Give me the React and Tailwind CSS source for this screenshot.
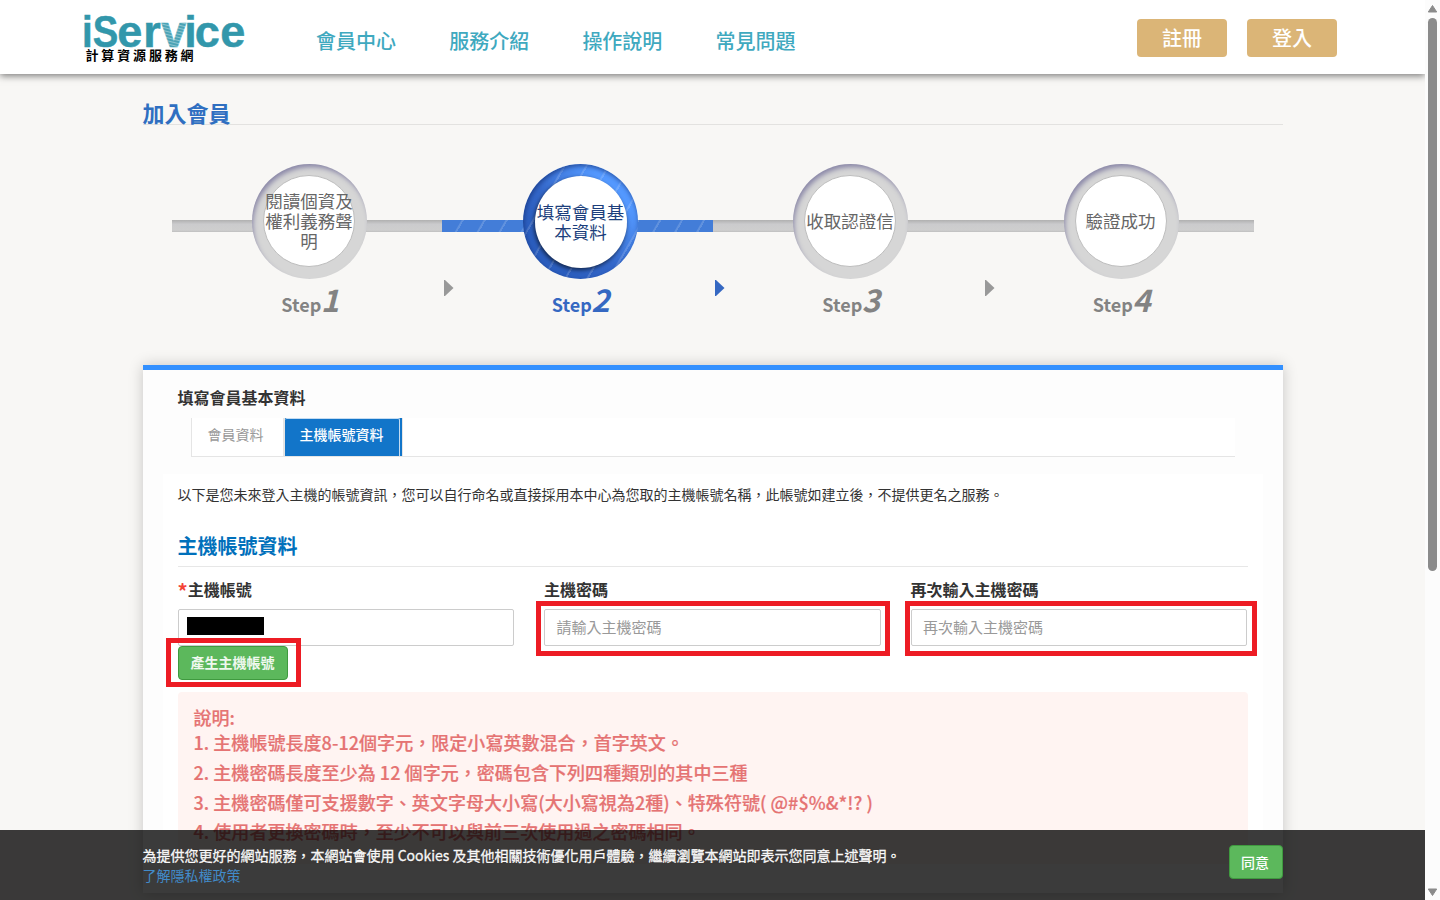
const NAV = ["會員中心", "服務介紹", "操作說明", "常見問題"];

const STEPS = [
  { n: 1, label: "閱讀個資及權利義務聲明" },
  { n: 2, label: "填寫會員基本資料", active: true },
  { n: 3, label: "收取認證信" },
  { n: 4, label: "驗證成功" },
];

const RULES = [
  "1. 主機帳號長度8-12個字元，限定小寫英數混合，首字英文。",
  "2. 主機密碼長度至少為 12 個字元，密碼包含下列四種類別的其中三種",
  "3. 主機密碼僅可支援數字、英文字母大小寫(大小寫視為2種)、特殊符號( @#$%&*!? )",
  "4. 使用者更換密碼時，至少不可以與前三次使用過之密碼相同。",
];

function Logo() {
  return (
    <svg width="172" height="66" viewBox="0 0 172 66" className="block">
      <defs>
        <pattern id="hatch" width="3" height="3" patternUnits="userSpaceOnUse" patternTransform="rotate(14)">
          <rect width="3" height="3" fill="#8fc5cf" />
          <rect width="3" height="2" fill="#4ba3b5" />
        </pattern>
      </defs>
      <g fontFamily="'Liberation Sans', sans-serif" fontWeight="700" fontSize="45" fill="#3297ab" stroke="#3297ab" strokeWidth="0.5">
        <text transform="scale(0.85 1)" x="7 19.8" y="47.3">iS</text>
        <text x="41.3 67.2 85.3 108.3 118.8 144.2" y="47.3">er<tspan fill="url(#hatch)" stroke="url(#hatch)">v</tspan>ice</text>
      </g>
      <text x="9.5" y="60" fontFamily="'Noto Sans CJK TC', sans-serif" fontWeight="700" fontSize="13" letterSpacing="2.85" fill="#000">
        計算資源服務網
      </text>
    </svg>
  );
}

function Header() {
  return (
    <header className="relative z-10 flex h-[74px] shrink-0 bg-white pl-[76px] pr-[88px] shadow-[0_2px_7px_rgba(0,0,0,0.5)]">
      <div className="w-[240px]"><Logo /></div>
      <nav className="flex h-[82px] items-center gap-[53.2px] text-xl leading-5 font-medium text-[#3fa9bf]">
        {NAV.map((t) => <a key={t}>{t}</a>)}
      </nav>
      <div className="ml-auto flex gap-5 pt-[19px]">
        {["註冊", "登入"].map((t) => (
          <button key={t} className="h-[38px] w-[90px] rounded bg-[#dbb577] text-xl leading-5 font-medium text-white">{t}</button>
        ))}
      </div>
    </header>
  );
}

function Ring({ active, label }) {
  if (active) {
    return (
      <div className="flex size-[115px] items-center justify-center rounded-full bg-[repeating-linear-gradient(120deg,rgba(255,255,255,0)_0_16.5px,rgba(255,255,255,0.16)_17.5px_19px),linear-gradient(45deg,#2c5fc0_25%,#3467c9_45%,#5499ff_78%)] pl-px shadow-[inset_1px_2px_5px_rgba(20,50,120,0.75)]">
        <div className="flex size-[92px] items-center justify-center rounded-full bg-white text-center text-[17.5px] leading-5 text-[#1d3f7c] shadow-[-1px_2px_4px_rgba(0,0,0,0.6)]">
          <span className="w-[90px]">{label}</span>
        </div>
      </div>
    );
  }
  return (
    <div className="flex size-[115px] items-center justify-center rounded-full bg-[#d6d6d6] pr-px pb-px shadow-[inset_2px_4px_5px_-1px_rgba(85,80,135,0.6)]">
      <div className="flex size-[92px] items-center justify-center rounded-full border border-[#bdbdbd] bg-white text-center text-[17.5px] leading-5 text-[#666]">
        <span className="-mx-1 w-[90px] shrink-0 pb-px">{label}</span>
      </div>
    </div>
  );
}

function Step({ n, label, active }) {
  return (
    <li className={active ? "w-[270.5px] text-[#3568c2]" : "w-[270.5px] text-[#838383]"}>
      <div className="grid items-center">
        <div className={active
          ? "col-start-1 row-start-1 mt-[9px] h-3 bg-[#437dd8] bg-[repeating-linear-gradient(120deg,rgba(255,255,255,0)_0_16.5px,rgba(255,255,255,0.16)_17.5px_19px)]"
          : "col-start-1 row-start-1 mt-[9px] h-3 bg-[#cecece] bg-[linear-gradient(#b0b0b0,#cbcbcd_35%,#cecece_85%,#bfbfbf)]"} />
        <div className="col-start-1 row-start-1 flex justify-center pl-[5.5px]">
          <div className="relative"><Ring active={active} label={label} /></div>
        </div>
      </div>
      <div className="flex h-11 items-baseline justify-center pl-[7px] font-bold">
        <span className="text-[18px] leading-[39px]">Step</span>
        <span className="-ml-[0.5px] text-[31px] leading-[39px] italic">{n}</span>
      </div>
    </li>
  );
}

function Arrow({ className }) {
  return (
    <svg className={className} width="10" height="16" viewBox="0 0 10 16">
      <path d="M0 0L1 0L9.5 8L1 16L0 16Z" fill="currentColor" />
    </svg>
  );
}

function Steps() {
  return (
    <div className="relative mt-[39px] ml-[29px]">
      <ol className="flex">
        {STEPS.map((s) => <Step key={s.n} {...s} />)}
      </ol>
      <Arrow className="absolute top-[116px] left-[272px] text-[#999]" />
      <Arrow className="absolute top-[116px] left-[543px] text-[#3568c2]" />
      <Arrow className="absolute top-[116px] left-[813px] text-[#999]" />
    </div>
  );
}

function Field({ label, required, placeholder, children, marked }) {
  return (
    <div className="w-[336.5px]">
      <label className="flex h-6 items-center text-base font-bold text-[#333]">
        {required && <span className="pt-[3px] text-[20px] leading-4 text-[#f44336]">*</span>}
        {label}
      </label>
      <div className="relative mt-2 flex h-[37px] items-center rounded-xs border border-[#ccc] bg-white px-[11.5px] text-[15px] text-[#999]">
        {placeholder}
        {children}
        {marked && <div className={marked} />}
      </div>
    </div>
  );
}

function Card() {
  return (
    <section className="mt-[42px] h-[528px] border-t-5 border-[#3390ff] bg-[#fdfdfd] px-5 shadow-[0_0_14px_rgba(0,0,0,0.2)]">
      <h3 className="ml-[15px] pt-[15px] text-base leading-6 font-bold text-[#333]">填寫會員基本資料</h3>
      <div className="mt-[9px] mr-7 ml-7 flex h-[39px] w-[1044px] border-b border-l border-[#e5e5e5] bg-white text-sm">
        <div className="w-[91px] pt-[6px] pl-4 leading-5 text-[#999]">會員資料</div>
        <div className="h-[38px] w-[120px] border-r border-l-2 border-[#e5e5e5] bg-[#1275c9]">
          <div className="h-full w-[115px] rounded-t-[2px] border-t border-r border-[#c4dcf2] pt-[5px] pl-[15px] leading-5 font-medium whitespace-nowrap text-white">主機帳號資料</div>
        </div>
      </div>
      <div className="mt-[17px] bg-white px-[15px] pt-[10px]">
        <p className="text-sm leading-5 text-[#333]">以下是您未來登入主機的帳號資訊，您可以自行命名或直接採用本中心為您取的主機帳號名稱，此帳號如建立後，不提供更名之服務。</p>
        <h2 className="mt-[27px] flex h-9 items-start border-b border-[#e7e7e7] text-xl leading-[30px] font-bold text-[#0070bb]">主機帳號資料</h2>
        <div className="mt-[10px] flex gap-[30px]">
          <div className="relative">
            <Field label="主機帳號" required>
              <div className="-ml-[3.5px] mt-[-4px] h-[18px] w-[77px] bg-black" />
            </Field>
            <button className="block h-[34px] w-[110px] rounded border border-[#3f9a3f] bg-[#5cb85c] pb-0.5 text-sm font-bold text-white/90">產生主機帳號</button>
            <div className="absolute top-[61px] -left-3 h-[49px] w-[135px] border-5 border-[#ed1c24]" />
          </div>
          <Field label="主機密碼" placeholder="請輸入主機密碼" marked="absolute -top-[9px] -left-[9px] h-[55px] w-[354px] border-5 border-[#ed1c24]" />
          <Field label="再次輸入主機密碼" placeholder="再次輸入主機密碼" marked="absolute -top-[9px] -left-[7px] h-[55px] w-[352px] border-5 border-[#ed1c24]" />
        </div>
        <div className="mt-3 h-[172px] rounded-sm bg-[#fff4f2] px-4 pt-[14px] text-lg font-medium tracking-[0.05px] text-[#e57373] [-webkit-text-stroke:0.2px_#e57373]">
          <p className="h-[22px] leading-[22px]">說明:</p>
          {RULES.map((r) => <p key={r} className="h-[29.8px] leading-[29.8px] whitespace-nowrap">{r}</p>)}
        </div>
      </div>
    </section>
  );
}

function CookieBar() {
  return (
    <footer className="absolute bottom-0 left-0 z-20 flex h-[70px] w-[1425px] justify-between bg-black/77 pr-[142px] pl-[142.5px]">
      <div className="pt-[15px] text-sm leading-5">
        <p className="text-white/95 [-webkit-text-stroke:0.3px_#fff]">為提供您更好的網站服務，本網站會使用 Cookies 及其他相關技術優化用戶體驗，繼續瀏覽本網站即表示您同意上述聲明。</p>
        <a className="text-[#428bca]">了解隱私權政策</a>
      </div>
      <button className="mt-[15px] h-[34px] w-[54px] rounded border border-[#3f9a3f] bg-[#5cb85c] pr-[2px] text-sm font-medium text-white">同意</button>
    </footer>
  );
}

function Scrollbar() {
  return (
    <div className="flex w-[15px] flex-col items-center bg-[#fcfcfc] pt-[5px] pr-px pb-1">
      <svg width="9" height="8" viewBox="0 0 9 8"><path d="M4.5 .5L8.7 7H.3Z" fill="#8b8b8b" stroke="#8b8b8b" strokeLinejoin="round" /></svg>
      <div className="mt-[5px] h-[553px] w-[9px] rounded-full bg-[#8b8b8b]" />
      <svg className="mt-auto" width="9" height="8" viewBox="0 0 9 8"><path d="M4.5 7.5L8.7 1H.3Z" fill="#8b8b8b" stroke="#8b8b8b" strokeLinejoin="round" /></svg>
    </div>
  );
}

export default function App() {
  return (
    <div className="relative flex h-[900px] w-[1440px] overflow-hidden bg-[#f8f7f5] font-['Noto_Sans_CJK_TC',sans-serif]">
      <div className="flex w-[1425px] flex-col overflow-hidden">
        <Header />
        <main className="mx-auto w-[1140px] pt-[27px]">
          <h1 className="h-6 border-b border-[#e3e2e0] text-[22px] leading-[22px] font-bold text-[#2f6fc1]">加入會員</h1>
          <Steps />
          <Card />
        </main>
      </div>
      <Scrollbar />
      <CookieBar />
    </div>
  );
}
